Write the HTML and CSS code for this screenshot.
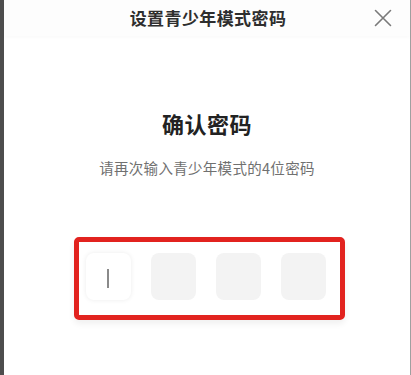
FILE: index.html
```html
<!DOCTYPE html>
<html lang="zh-CN">
<head>
<meta charset="utf-8">
<title>设置青少年模式密码</title>
<link rel="stylesheet" href="styles.css">
</head>
<body>
<div class="sheet">
  <header class="header">
    <span></span>
    <h1 class="header-title">设置青少年模式密码</h1>
    <button class="close" aria-label="关闭">
      <svg width="18" height="18" viewBox="0 0 18 18"><path d="M1.5 1.5 L16.5 16.5 M16.5 1.5 L1.5 16.5" stroke="#7a7a7a" stroke-width="1.6" fill="none" stroke-linecap="round"/></svg>
    </button>
  </header>
  <main class="main">
    <h2 class="title">确认密码</h2>
    <p class="subtitle">请再次输入青少年模式的4位密码</p>
    <div class="highlight">
      <div class="code-row">
        <div class="cell active"><span class="caret"></span></div>
        <div class="cell"></div>
        <div class="cell"></div>
        <div class="cell"></div>
      </div>
    </div>
  </main>
</div>
</body>
</html>
```

FILE: styles.css
```css
html, body {
  margin: 0;
  padding: 0;
  background: #ffffff;
}
body {
  font-family: "Noto Sans CJK SC", "Noto Sans", sans-serif;
  width: 411px;
  height: 375px;
  overflow: hidden;
}
.sheet {
  box-sizing: border-box;
  height: 375px;
  border-left: 4px solid #4d4d4d;
  border-right: 1px solid #a0a0a0;
  background: #ffffff;
}
.header {
  height: 36px;
  display: grid;
  grid-template-columns: 1fr auto 1fr;
  align-items: center;
  background: #fdfdfd;
  box-shadow: 0 2px 3px rgba(0,0,0,0.02);
}
.header-title {
  margin: 0;
  font-size: 17px;
  font-weight: 600;
  color: #2e2e2e;
  line-height: 36px;
  letter-spacing: 0.4px;
  padding-left: 2px;
}
.close {
  justify-self: end;
  margin-right: 18px;
  padding: 0;
  border: 0;
  background: none;
  width: 18px;
  height: 18px;
  display: flex;
}
.main {
  display: flex;
  flex-direction: column;
  align-items: center;
  padding-top: 72px;
}
.title {
  margin: 0;
  font-size: 22px;
  font-weight: 700;
  line-height: 30px;
  color: #222222;
  letter-spacing: 0.5px;
}
.subtitle {
  margin: 19px 0 0;
  font-size: 14.5px;
  line-height: 22px;
  color: #707070;
  letter-spacing: 0.3px;
}
.highlight {
  margin: 58px 0 0 5px;
  border: 5px solid #e2231f;
  border-radius: 5px;
  padding: 11px 14px 15px 7px;
  box-shadow: 0 4px 6px rgba(0,0,0,0.06);
}
.code-row {
  display: flex;
  gap: 20px;
}
.cell {
  width: 45px;
  height: 47px;
  border-radius: 8px;
  background: #f3f3f3;
  display: flex;
  align-items: center;
  justify-content: center;
}
.cell.active {
  background: #ffffff;
  box-shadow: 0 0 5px rgba(0,0,0,0.08);
}
.caret {
  width: 1.5px;
  height: 19px;
  background: #8a8a8a;
  margin-left: -1px;
  margin-top: 4px;
}
```
